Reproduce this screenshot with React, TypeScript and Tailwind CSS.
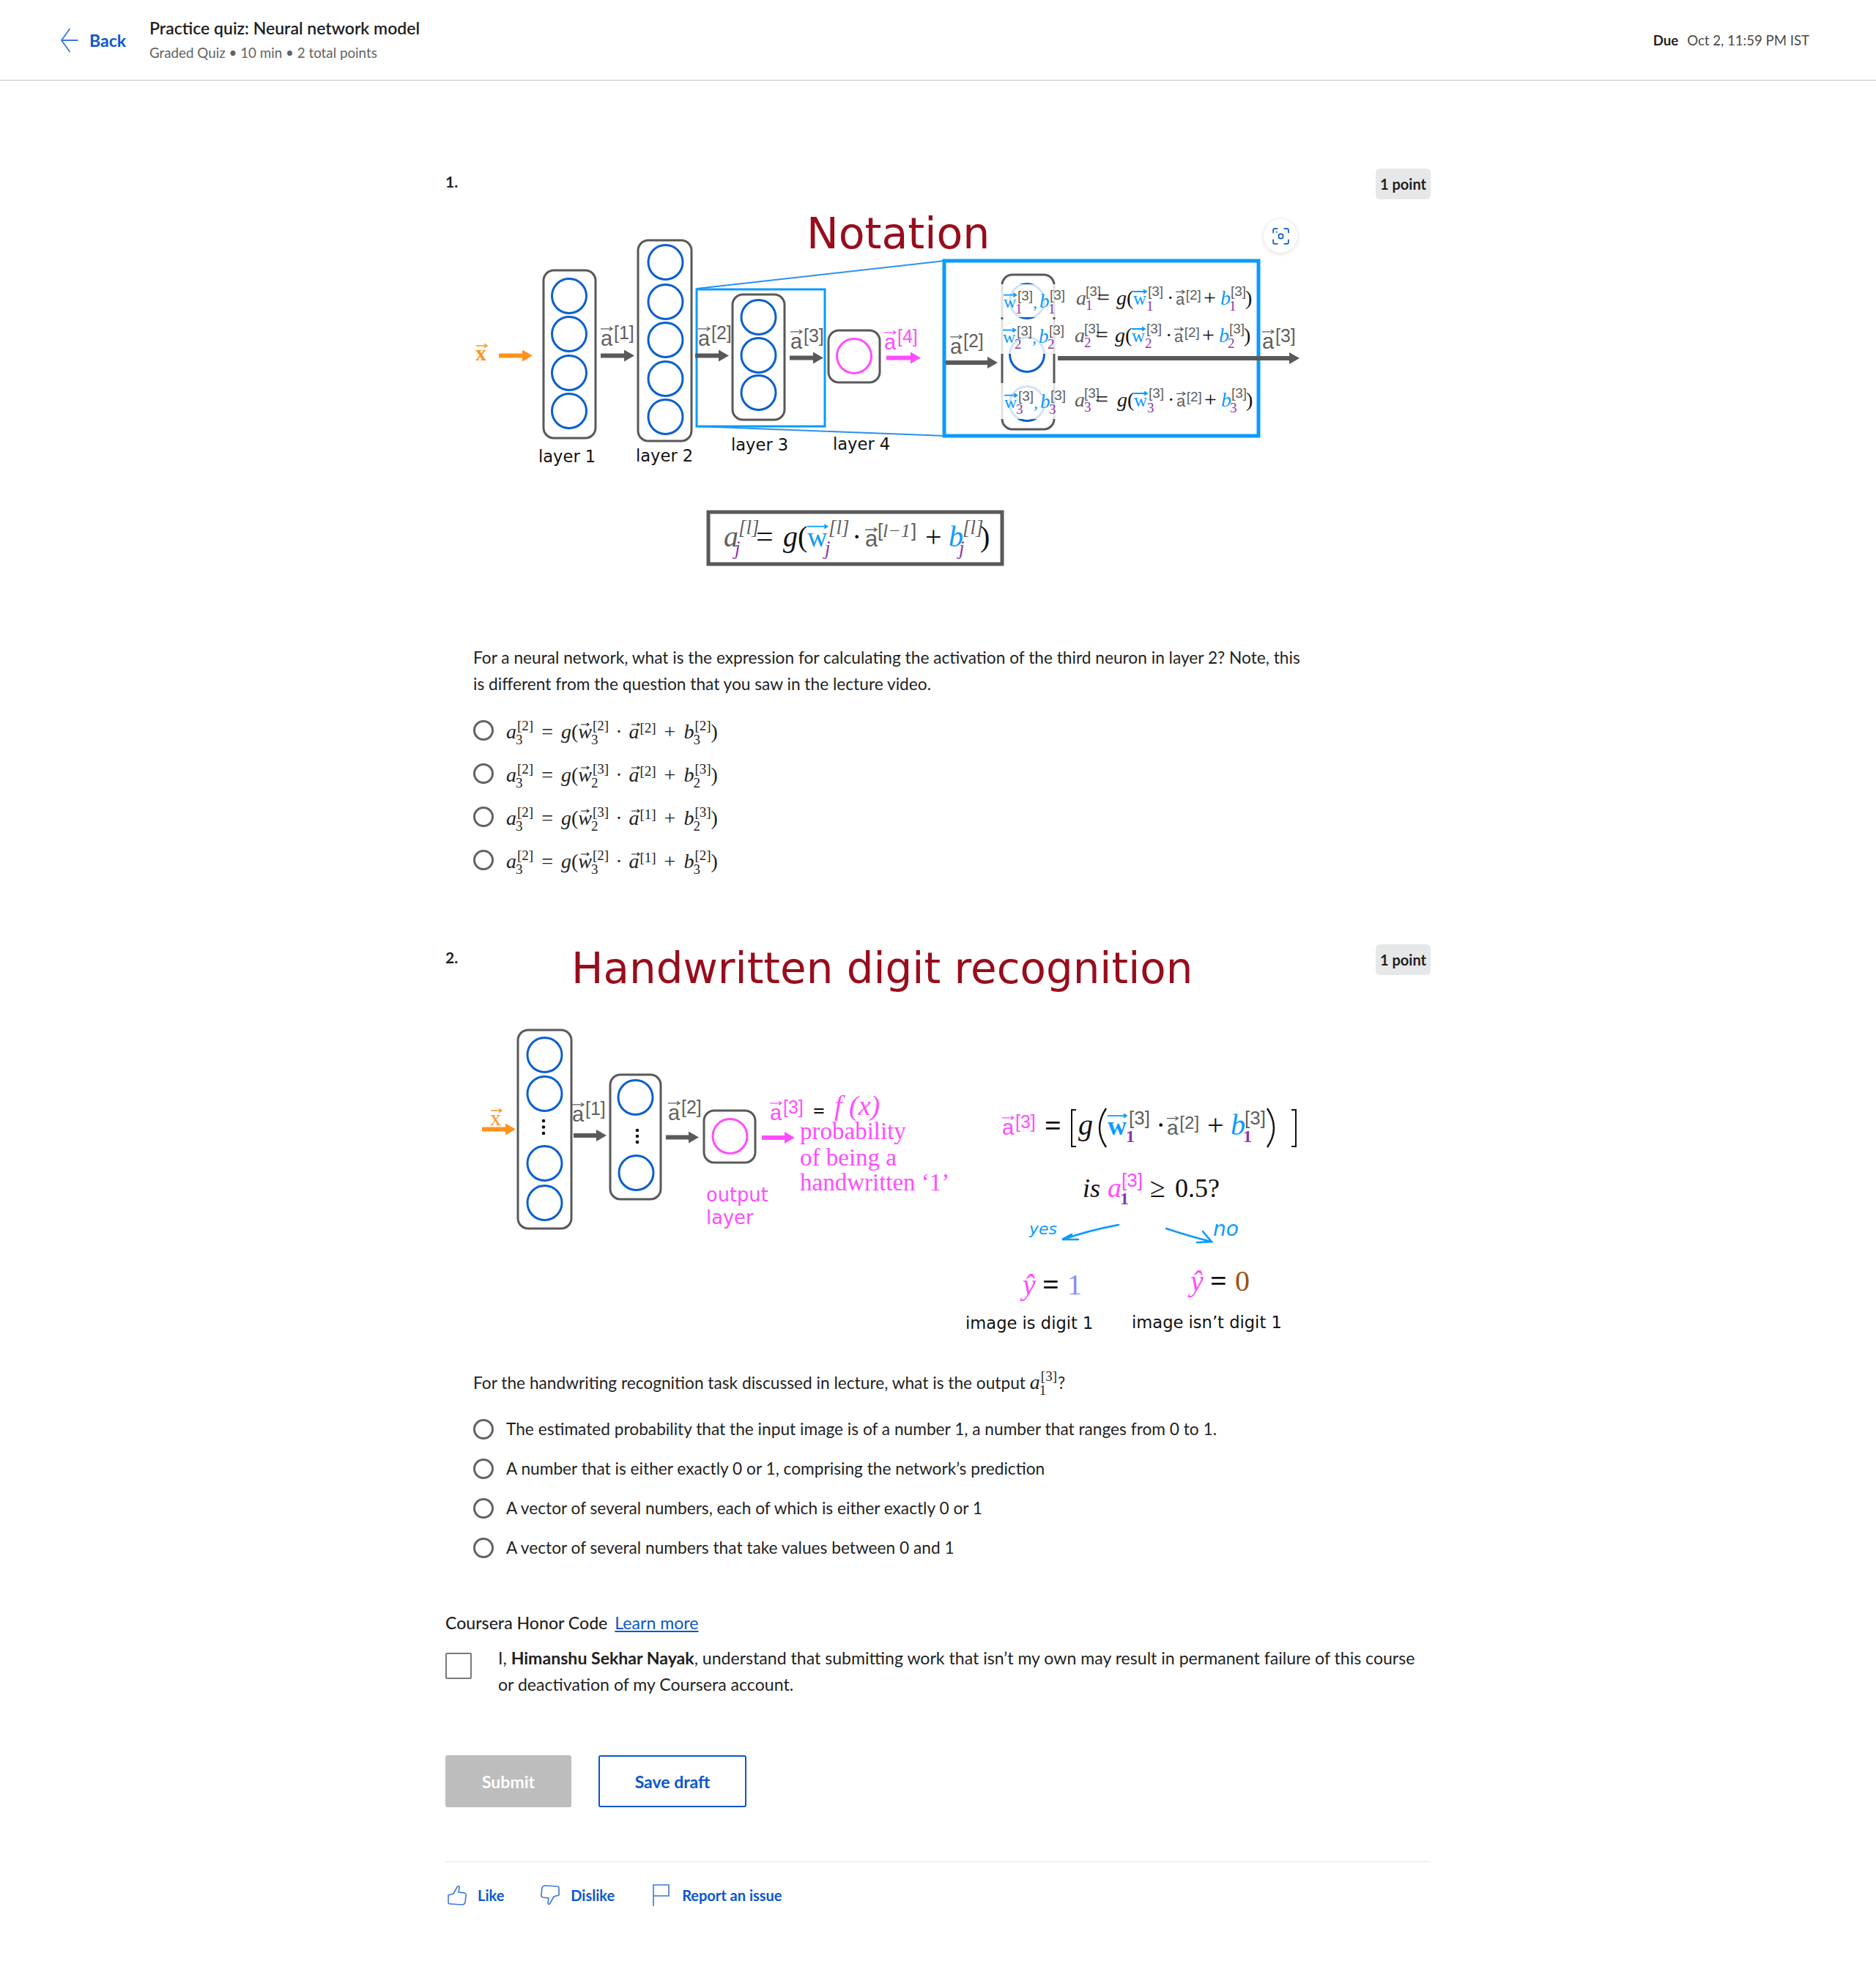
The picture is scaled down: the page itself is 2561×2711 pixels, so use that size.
import React from "react";

const BLUE = "#0a5fd0";
const CYAN = "#0a9bff";
const MAG = "#ff4dff";
const GRAY = "#595959";
const TXT = "#5f5f5f";
const PUR = "#8a35b0";
const SERIF = "'Liberation Serif', serif";
const SANS = "'Liberation Sans', sans-serif";
const DJV = "'DejaVu Sans', sans-serif";

type TP = { x: number; y: number; s: number; c?: string; f?: string; i?: boolean; b?: boolean; children: React.ReactNode };
const T = ({ x, y, s, c = "#111", f = SERIF, i, b, children }: TP) => (
  <text x={x} y={y} fontSize={s} fill={c} fontFamily={f} fontStyle={i ? "italic" : "normal"} fontWeight={b ? 700 : 400}>
    {children}
  </text>
);

const Arrow = ({ x1, x2, y, c = GRAY, t = 6 }: { x1: number; x2: number; y: number; c?: string; t?: number }) => (
  <g>
    <rect x={x1} y={y - t / 2} width={x2 - x1 - 12} height={t} fill={c} />
    <polygon points={`${x2 - 14},${y - 8} ${x2},${y} ${x2 - 14},${y + 8}`} fill={c} />
  </g>
);

const VecBar = ({ x, y, w, c, t = 1.3 }: { x: number; y: number; w: number; c: string; t?: number }) => (
  <path d={`M${x} ${y}H${x + w}M${x + w - 4} ${y - 2.6}L${x + w} ${y}L${x + w - 4} ${y + 2.6}`} fill="none" stroke={c} strokeWidth={t} />
);

const AVec = ({ x, y, n, c = TXT, s = 28 }: { x: number; y: number; n: string; c?: string; s?: number }) => (
  <g>
    <VecBar x={x} y={y - s * 0.8} w={s * 0.55} c={c} />
    <T x={x} y={y} s={s} c={c} f={SANS}>a</T>
    <T x={x + s * 0.62} y={y - s * 0.3} s={s * 0.86} c={c} f={SANS}>{n}</T>
  </g>
);

const Net = ({ x, y, w, h, r = 14 }: { x: number; y: number; w: number; h: number; r?: number }) => (
  <rect x={x} y={y} width={w} height={h} rx={r} fill="#fff" stroke={GRAY} strokeWidth={3} />
);
const C = ({ x, y, c = BLUE, r = 23.5 }: { x: number; y: number; c?: string; r?: number }) => (
  <circle cx={x} cy={y} r={r} fill="none" stroke={c} strokeWidth={3} />
);

const WVec = ({ x, y, s, b }: { x: number; y: number; s: number; b?: boolean }) => (
  <g>
    <VecBar x={x} y={y - s * 0.72} w={s * 0.72} c={CYAN} t={1.8} />
    <T x={x} y={y} s={s} c={CYAN} b={b}>w</T>
  </g>
);

const EqRow = ({ dx, dy, n, dz = 0 }: { dx: number; dy: number; n: string; dz?: number }) => (
  <g transform={`translate(${dx} ${dy})`}>
    <T x={1469} y={416} s={28} i c="#5f5f5f">a</T>
    <T x={1482} y={404} s={19} c={TXT} f={SANS}>[3]</T>
    <T x={1482} y={423} s={19} c={PUR}>{n}</T>
    <T x={1498} y={416} s={30}>=</T>
    <g transform={`translate(${dz} 0)`}>
      <T x={1524} y={416} s={28} i>g</T>
      <T x={1538} y={416} s={28}>(</T>
      <WVec x={1547} y={416} s={25} />
      <T x={1567} y={404} s={19} c={TXT} f={SANS}>[3]</T>
      <T x={1565} y={424} s={19} c={PUR}>{n}</T>
      <T x={1593} y={416} s={28}>·</T>
      <AVec x={1605} y={416} n="[2]" s={22} />
      <T x={1643} y={416} s={30}>+</T>
      <T x={1666} y={416} s={28} i c={CYAN}>b</T>
      <T x={1680} y={404} s={19} c={TXT} f={SANS}>[3]</T>
      <T x={1678} y={424} s={19} c={PUR}>{n}</T>
      <T x={1700} y={416} s={28}>)</T>
    </g>
  </g>
);

const WbCol = ({ dy, n, dx = 0 }: { dy: number; n: string; dx?: number }) => (
  <g transform={`translate(${dx} ${dy})`}>
    <WVec x={1370} y={420} s={24} />
    <T x={1389} y={410} s={19} c={TXT} f={SANS}>[3]</T>
    <T x={1386} y={428} s={19} c={PUR}>{n}</T>
    <T x={1410} y={420} s={24} c={CYAN} i>,</T>
    <T x={1419} y={420} s={27} c={CYAN} i>b</T>
    <T x={1433} y={409} s={19} c={TXT} f={SANS}>[3]</T>
    <T x={1431} y={428} s={19} c={PUR}>{n}</T>
  </g>
);

const Notation = () => (
  <svg viewBox="646 230 1232 640" width={1232} height={640} className="block">
    <T x={1101} y={339} s={58.5} c="#980d1c" f={DJV}>Notation</T>

    <Net x={742} y={369} w={71} h={229} />
    {[404, 456, 509, 561].map((y) => <C key={y} x={777} y={y} />)}
    <Net x={871} y={328} w={73} h={274} />
    {[358, 412, 464, 517, 569].map((y) => <C key={y} x={908.5} y={y} />)}

    <path d="M951 394L1289 356M951 582L1289 595" stroke="#2d8fef" strokeWidth={2} fill="none" />
    <rect x={951} y={395} width={175} height={187} fill="none" stroke={CYAN} strokeWidth={3} />
    <Net x={1000} y={402} w={71} h={171} />
    {[433, 485, 536].map((y) => <C key={y} x={1035.5} y={y} />)}
    <Net x={1131} y={451} w={70} h={71} />
    <C x={1166} y={486} c={MAG} />

    <Arrow x1={681} x2={727} y={485.5} c="#ff931e" />
    <Arrow x1={820} x2={866} y={485.5} />
    <Arrow x1={949} x2={995} y={485.5} />
    <Arrow x1={1078} x2={1124} y={488.5} />
    <Arrow x1={1210} x2={1257} y={488.5} c={MAG} />

    <VecBar x={650} y={472} w={15} c="#ff931e" />
    <T x={649} y={492} s={30} c="#ff931e" b>x</T>
    <AVec x={820} y={472} n="[1]" s={29} />
    <AVec x={953} y={472} n="[2]" s={29} />
    <AVec x={1079} y={476} n="[3]" s={29} />
    <AVec x={1207} y={477} n="[4]" c={MAG} s={29} />

    <T x={735} y={631} s={22.6} f={DJV}>layer 1</T>
    <T x={868} y={630} s={22.6} f={DJV}>layer 2</T>
    <T x={998} y={614.5} s={22.6} f={DJV}>layer 3</T>
    <T x={1137} y={614} s={22.6} f={DJV}>layer 4</T>

    <rect x={967} y={699} width={401} height={71} fill="none" stroke={GRAY} strokeWidth={5} />
    <T x={988} y={746} s={40} i c={TXT}>a</T>
    <T x={1008} y={729} s={27} c={TXT} i>[l]</T>
    <T x={1003} y={757} s={27} c={PUR} i>j</T>
    <T x={1032} y={746} s={42}>=</T>
    <T x={1069} y={746} s={40} i>g</T>
    <T x={1089} y={746} s={40}>(</T>
    <WVec x={1102} y={746} s={38} />
    <T x={1131} y={729} s={27} c={TXT} i>[l]</T>
    <T x={1126} y={757} s={27} c={PUR} i>j</T>
    <T x={1163} y={746} s={40}>·</T>
    <VecBar x={1181} y={723} w={16} c={TXT} />
    <T x={1181} y={746} s={31} c={TXT} f={SANS}>a</T>
    <T x={1198} y={733} s={26} c={TXT} f={SANS}>[</T>
    <T x={1205} y={733} s={26} c={TXT} i>l−1</T>
    <T x={1244} y={733} s={26} c={TXT} f={SANS}>]</T>
    <T x={1263} y={746} s={40}>+</T>
    <T x={1295} y={746} s={40} i c={CYAN}>b</T>
    <T x={1314} y={729} s={27} c={TXT} i>[l]</T>
    <T x={1309} y={757} s={27} c={PUR} i>j</T>
    <T x={1338} y={746} s={40}>)</T>

    <rect x={1368} y={375} width={71} height={211} rx={14} fill="#fff" stroke={GRAY} strokeWidth={3} />
    <C x={1402} y={411} />
    <C x={1402} y={484} />
    <C x={1402} y={551} />
    <rect x={1360} y={388} width={88} height={45} fill="#fff" opacity={0.82} />
    <rect x={1360} y={436} width={88} height={47} fill="#fff" opacity={0.82} />
    <rect x={1360} y={523} width={88} height={49} fill="#fff" opacity={0.82} />
    <rect x={1289} y={356} width={429} height={239} fill="none" stroke={CYAN} strokeWidth={5} />

    <AVec x={1297} y={483} n="[2]" s={29} />
    <Arrow x1={1291} x2={1362} y={495} />
    <Arrow x1={1444} x2={1774} y={489} />
    <AVec x={1723} y={476} n="[3]" s={29} />
    <WbCol dy={0} n="1" />
    <WbCol dy={48} n="2" dx={-1} />
    <WbCol dy={137} n="3" dx={1} />
    <EqRow dx={0} dy={0} n="1" />
    <EqRow dx={-2} dy={51} n="2" />
    <EqRow dx={-2} dy={139} n="3" dz={3} />
  </svg>
);

const Digit = () => (
  <svg viewBox="646 1289 1232 575" width={1232} height={575} className="block">
    <T x={780} y={1342} s={57.9} c="#980d1c" f={DJV}>Handwritten digit recognition</T>

    <Net x={707} y={1406} w={73} h={271} />
    {[1440, 1493, 1588, 1642].map((y) => <C key={y} x={743.5} y={y} />)}
    {[1530, 1538.5, 1547].map((y) => <circle key={y} cx={742} cy={y} r={2.3} fill="#111" />)}
    <Net x={833} y={1467} w={69} h={170} />
    <C x={867.5} y={1498} />
    <C x={868.5} y={1601} />
    {[1543, 1551, 1559].map((y) => <circle key={y} cx={870} cy={y} r={2.3} fill="#111" />)}
    <Net x={961} y={1516} w={70} h={71} />
    <C x={996.5} y={1551} c={MAG} />

    <Arrow x1={658} x2={704} y={1541.5} c="#ff931e" />
    <Arrow x1={783} x2={828} y={1550} />
    <Arrow x1={909} x2={954} y={1552.5} />
    <Arrow x1={1040} x2={1085} y={1553} c={MAG} />

    <VecBar x={670} y={1516} w={15} c="#ff931e" />
    <T x={669} y={1536} s={30} c="#ff931e">x</T>
    <AVec x={781} y={1531} n="[1]" s={29} />
    <AVec x={912} y={1529} n="[2]" s={29} />
    <AVec x={1051} y={1529} n="[3]" c={MAG} s={29} />
    <T x={1110} y={1526} s={28} b>=</T>
    <T x={1139} y={1522} s={38} c={MAG} i>f (x)</T>
    <T x={1092} y={1555} s={33} c={MAG}>probability</T>
    <T x={1092} y={1591} s={33} c={MAG}>of being a</T>
    <T x={1092} y={1625} s={33} c={MAG}>handwritten ‘1’</T>
    <T x={964} y={1640} s={25.7} c={MAG} f={DJV}>output</T>
    <T x={964} y={1671} s={25.7} c={MAG} f={DJV}>layer</T>

    <AVec x={1368} y={1549} n="[3]" c={MAG} s={29} />
    <T x={1426} y={1550} s={40} b>=</T>
    <path d="M1469 1515H1463V1565H1469M1763 1515H1769V1565H1763" fill="none" stroke="#111" strokeWidth={2} />
    <T x={1472} y={1549} s={40} i>g</T>
    <path d="M1510 1513Q1492 1540 1510 1566M1730 1513Q1748 1540 1730 1566" fill="none" stroke="#111" strokeWidth={2.4} />
    <WVec x={1512} y={1549} s={36} b />
    <T x={1541} y={1535} s={26} c={TXT} f={SANS}>[3]</T>
    <T x={1537} y={1559} s={24} c={PUR} b>1</T>
    <T x={1578} y={1549} s={40}>·</T>
    <AVec x={1593} y={1549} n="[2]" s={28} />
    <T x={1648} y={1549} s={40}>+</T>
    <T x={1680} y={1549} s={40} i c={CYAN}>b</T>
    <T x={1699} y={1535} s={26} c={TXT} f={SANS}>[3]</T>
    <T x={1697} y={1559} s={24} c={PUR} b>1</T>

    <T x={1478} y={1634} s={36} i>is</T>
    <T x={1512} y={1634} s={38} i c={MAG}>a</T>
    <T x={1531} y={1620} s={26} c={MAG} f={SANS}>[3]</T>
    <T x={1529} y={1644} s={24} c={PUR} b>1</T>
    <T x={1570} y={1634} s={38}>≥</T>
    <T x={1604} y={1634} s={36}>0.5?</T>

    <T x={1405} y={1685} s={22} c={CYAN} f={DJV} i>yes</T>
    <T x={1656} y={1687} s={28} c={CYAN} f={DJV} i>no</T>
    <path d="M1527 1672Q1485 1680 1451 1692M1463 1685L1450 1692L1472 1692" fill="none" stroke={CYAN} strokeWidth={2.6} strokeLinecap="round" />
    <path d="M1592 1677Q1625 1688 1654 1695M1642 1681L1654 1695L1634 1696" fill="none" stroke={CYAN} strokeWidth={2.6} strokeLinecap="round" />

    <T x={1396} y={1767} s={40} i c={MAG}>ŷ</T>
    <T x={1423} y={1767} s={40} b>=</T>
    <T x={1457} y={1767} s={40} c="#8a8aff">1</T>
    <T x={1625} y={1762} s={40} i c={MAG}>ŷ</T>
    <T x={1652} y={1762} s={40} b>=</T>
    <T x={1686} y={1762} s={40} c="#a0500f">0</T>

    <T x={1318} y={1814} s={22.6} f={DJV}>image is digit 1</T>
    <T x={1545} y={1813} s={22.6} f={DJV}>image isn’t digit 1</T>
  </svg>
);

const I = ({ children }: { children: React.ReactNode }) => <span className="italic">{children}</span>;

const Stack = ({ sup, sub, top = 11 }: { sup: string; sub?: string; top?: number }) => (
  <span className="inline-flex flex-col text-[19px] leading-[19px] not-italic ml-[1px]" style={{ verticalAlign: `${top}px` }}>
    <span>{sup}</span>
    {sub && <span className="-ml-[2px]">{sub}</span>}
  </span>
);

const MVec = ({ children }: { children: React.ReactNode }) => (
  <span className="relative inline-block italic">
    {children}
    <svg viewBox="0 0 12 6" className="absolute left-[4px] top-[1px] w-[12px] h-[6px]">
      <path d="M0 3H11M8 1L11 3L8 5" fill="none" stroke="#222" strokeWidth={1.2} />
    </svg>
  </span>
);

const Formula = ({ a, w, wsub, prev, b, bsub }: { a: string; w: string; wsub: string; prev: string; b: string; bsub: string }) => (
  <span className="mt-[6px] font-['Liberation_Serif',serif] text-[28px] leading-none text-[#222] whitespace-nowrap">
    <I>a</I>
    <Stack sup={a} sub="3" />
    <span className="mx-[11px]">=</span>
    <I>g</I>(<MVec>w</MVec>
    <Stack sup={w} sub={wsub} />
    <span className="mx-[9px]">·</span>
    <MVec>a</MVec>
    <Stack sup={prev} top={8} />
    <span className="mx-[11px]">+</span>
    <I>b</I>
    <Stack sup={b} sub={bsub} />)
  </span>
);

const Radio = () => <span className="block w-[28px] h-[28px] shrink-0 rounded-full border-[3px] border-[#636363]" />;

const Badge = () => (
  <span className="w-[75px] h-[42px] shrink-0 flex items-center justify-center rounded-[6px] bg-[#e6e7e8] text-[20px] font-bold text-[#1f1f1f]">
    1 point
  </span>
);

const Question = ({ n, children }: { n: string; children: React.ReactNode }) => (
  <div className="flex items-start">
    <div className="w-[38px] shrink-0 pt-[5px] text-[21px] font-bold text-[#1f1f1f] leading-[26px]">{n}</div>
    <div className="w-[1232px] relative">{children}</div>
    <Badge />
  </div>
);

export default function App() {
  const opts1 = [
    { a: "[2]", w: "[2]", wsub: "3", prev: "[2]", b: "[2]", bsub: "3" },
    { a: "[2]", w: "[3]", wsub: "2", prev: "[2]", b: "[3]", bsub: "2" },
    { a: "[2]", w: "[3]", wsub: "2", prev: "[1]", b: "[3]", bsub: "2" },
    { a: "[2]", w: "[2]", wsub: "3", prev: "[1]", b: "[2]", bsub: "3" },
  ];
  const opts2 = [
    "The estimated probability that the input image is of a number 1, a number that ranges from 0 to 1.",
    "A number that is either exactly 0 or 1, comprising the network’s prediction",
    "A vector of several numbers, each of which is either exactly 0 or 1",
    "A vector of several numbers that take values between 0 and 1",
  ];
  return (
    <div className="min-h-[2711px] bg-white font-['Lato',sans-serif] text-[#1f1f1f] text-[22.7px] leading-[36px]">
      <header className="h-[110px] border-b border-[#c4c4c4] flex items-center pl-[82px] pr-[91px]">
        <a className="flex items-center gap-[14px] w-[122px] text-[#0a56d0] font-bold text-[23px]">
          <svg viewBox="0 0 25 36" className="w-[26px] h-[36px]">
            <path d="M24 18H2M13 2L1.5 18L13 34" fill="none" stroke="#3b76db" strokeWidth={1.8} />
          </svg>
          Back
        </a>
        <div className="flex flex-col">
          <div className="text-[23px] leading-[30px] font-semibold">Practice quiz: Neural network model</div>
          <div className="text-[18.8px] leading-[30px] mt-[4px] text-[#636363]">Graded Quiz • 10 min • 2 total points</div>
        </div>
        <div className="ml-auto text-[18.6px] text-[#4a4a4a]">
          <span className="font-bold text-[#1f1f1f] mr-[12px]">Due</span>Oct 2, 11:59 PM IST
        </div>
      </header>

      <main className="w-[1345px] ml-[608px] pt-[120px]">
        <Question n="1.">
          <Notation />
          <span className="absolute left-[1079px] top-[69px] w-[46px] h-[46px] rounded-full bg-white shadow-[0_1px_6px_rgba(0,0,0,0.15)] flex items-center justify-center">
            <svg viewBox="0 0 24 24" className="w-[25px] h-[25px]">
              <path d="M2 8V4a2 2 0 0 1 2-2h4M16 2h4a2 2 0 0 1 2 2v4M22 16v4a2 2 0 0 1-2 2h-4M8 22H4a2 2 0 0 1-2-2v-4" fill="none" stroke="#0a56d0" strokeWidth={1.6} />
              <circle cx="12" cy="12" r="3" fill="none" stroke="#0a56d0" strokeWidth={1.6} />
              <circle cx="6.5" cy="6.5" r="0.9" fill="#0a56d0" />
            </svg>
          </span>
          <p className="mt-[10px]">
            For a neural network, what is the expression for calculating the activation of the third neuron in layer 2? Note, this
            <br />
            is different from the question that you saw in the lecture video.
          </p>
          <div className="mt-[15px] flex flex-col">
            {opts1.map((o, i) => (
              <label key={i} className="h-[59px] flex items-center gap-[17px]">
                <Radio />
                <Formula {...o} />
              </label>
            ))}
          </div>
        </Question>

        <div className="mt-[86px]">
          <Question n="2.">
            <Digit />
            <p className="mt-[5px]">
              For the handwriting recognition task discussed in lecture, what is the output{" "}
              <span className="font-['Liberation_Serif',serif] text-[28px] leading-none">
                <I>a</I>
                <Stack sup="[3]" sub="1" />
              </span>
              <span className="ml-[1px]">?</span>
            </p>
            <div className="mt-[17px] flex flex-col">
              {opts2.map((t) => (
                <label key={t} className="h-[54px] flex items-center gap-[17px]">
                  <Radio />
                  <span>{t}</span>
                </label>
              ))}
            </div>
          </Question>
        </div>

        <div className="mt-[57px] text-[23.1px]">
          <span className="font-medium">Coursera Honor Code</span>
          <a className="ml-[10px] text-[#0a56d0] underline">Learn more</a>
        </div>
        <div className="mt-[12px] flex items-start text-[23.1px]">
          <span className="mt-[11px] block w-[36px] h-[36px] shrink-0 border-2 border-[#7a7a7a] rounded-[2px]" />
          <p className="ml-[36px]">
            I, <strong className="font-bold">Himanshu Sekhar Nayak</strong>, understand that submitting work that isn’t my own may result in permanent failure of this course
            <br />
            or deactivation of my Coursera account.
          </p>
        </div>
        <div className="mt-[79px] flex gap-[37px]">
          <button className="w-[172px] h-[71px] rounded-[3px] bg-[#bdbdbd] text-white font-bold text-[23px]">Submit</button>
          <button className="w-[202px] h-[71px] rounded-[3px] border-2 border-[#0a56d0] text-[#0a56d0] font-bold text-[23px]">Save draft</button>
        </div>
        <div className="mt-[74px] pt-[31px] border-t border-[#e5e5e5] flex items-center h-[60px] text-[#0a56d0] font-bold text-[20px]">
          <a className="flex items-center gap-[15px] ml-[3px]">
            <svg viewBox="0 0 26 28" className="w-[26px] h-[28px]">
              <path d="M1 14L8 12L13 3Q15 0 16 3L15 10L23 11Q26 12 25 15L24 24Q23 27 20 27L4 26Q1 26 1 24Z" fill="none" stroke="#3b76db" strokeWidth={1.6} />
            </svg>
            Like
          </a>
          <a className="flex items-center gap-[15px] ml-[50px]">
            <svg viewBox="0 0 26 28" className="w-[26px] h-[28px]">
              <path d="M25 14L18 16L13 25Q11 28 10 25L11 18L3 17Q0 16 1 13L2 4Q3 1 6 1L22 2Q25 2 25 4Z" fill="none" stroke="#3b76db" strokeWidth={1.6} />
            </svg>
            Dislike
          </a>
          <a className="flex items-center gap-[17px] ml-[52px]">
            <svg viewBox="0 0 23 30" className="w-[23px] h-[30px]">
              <path d="M1 30V1H22V16H1" fill="none" stroke="#3b76db" strokeWidth={1.6} />
            </svg>
            Report an issue
          </a>
        </div>
      </main>
    </div>
  );
}
